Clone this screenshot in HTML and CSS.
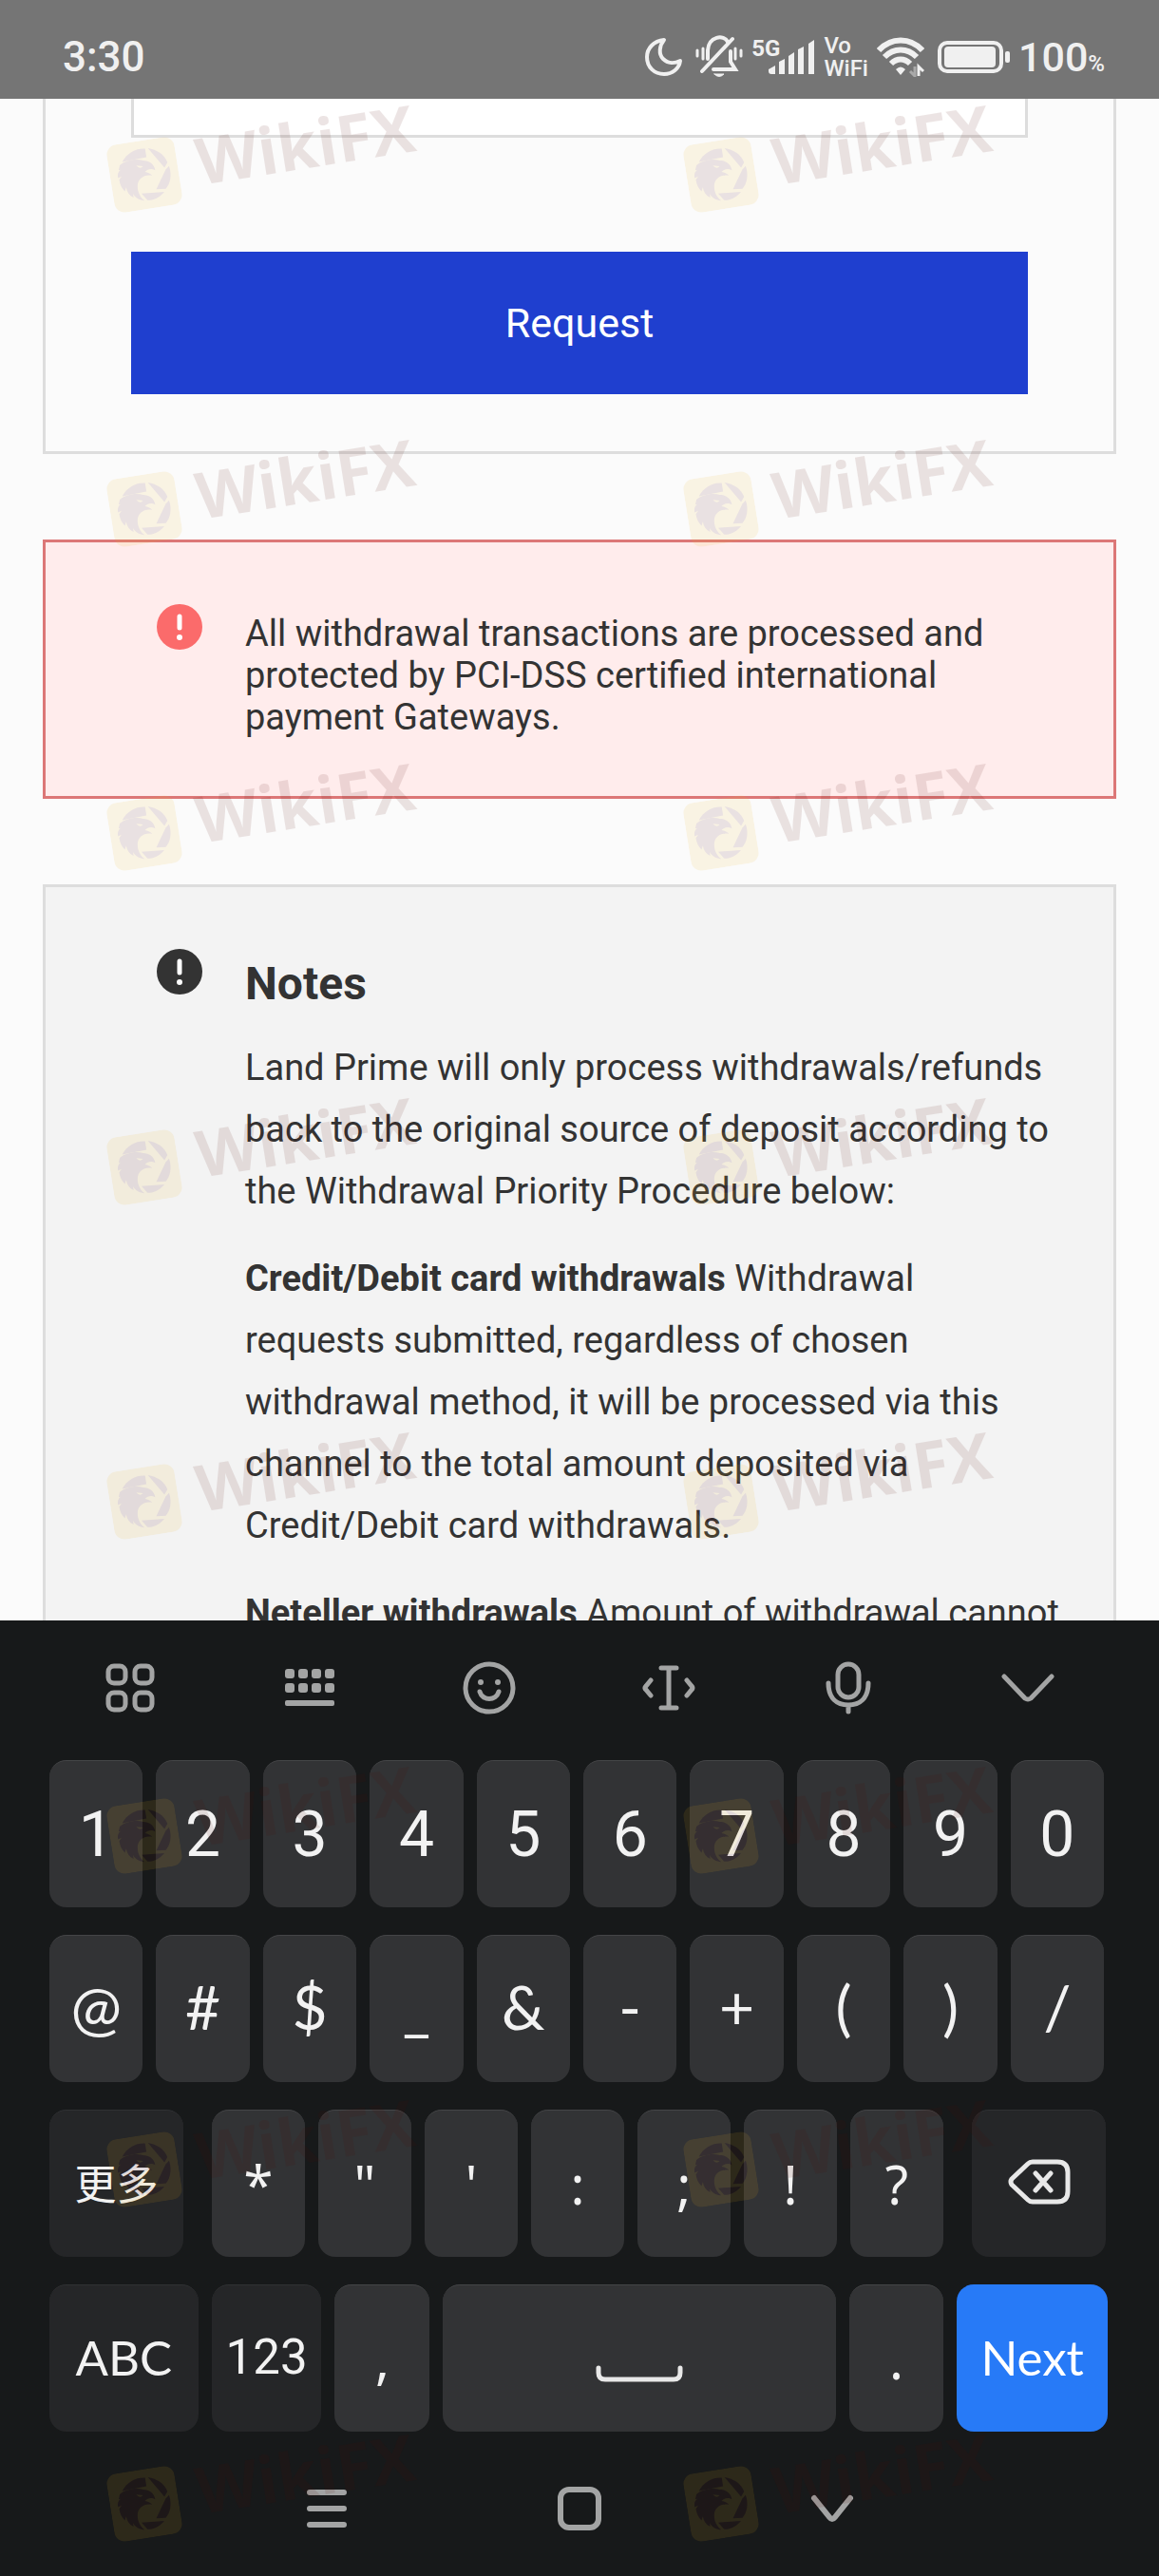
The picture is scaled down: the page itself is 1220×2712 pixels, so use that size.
FILE: index.html
```html
<!DOCTYPE html>
<html lang="en">
<head>
    <meta charset="UTF-8">
    <meta name="viewport" content="width=device-width, initial-scale=1.0">
    <title>Withdrawal request</title>
    <link rel="stylesheet" href="styles.css">
</head>
<body>
    <svg class="defs" aria-hidden="true">
        <symbol id="badge" viewBox="0 0 72 72">
            <rect width="72" height="72" rx="11" fill="#f1b41a"/>
            <g fill="#540810">
                <path d="M15 19 C22 10 32 7 41 9 L41 18 Z"/>
                <path d="M44 9 C53 12 60 18 62 27 L58 32 Z"/>
                <path d="M63 31 C65 41 61 50 56 54 L46 53 L59 34 Z"/>
                <path d="M54 57 C47 63 40 64 35 63 L30 55 Z"/>
                <path d="M12 22 C18 18 30 17 37 21 C43 22 48 26 48 33 C44 30 40 31 37 33 C40 34 43 36 44 38 C36 35 28 39 27 47 C26 53 28 59 32 63 C27 62 23 59 21 54 L21 58 C17 55 15 51 15 46 L13 50 C10 46 9 42 9 37 L12 34 L8 35 C8 31 9 29 12 27 L10 27 Z"/>
            </g>
            <path d="M29 25 L36 27 Q32 30 29 25 Z" fill="#f1b41a"/>
        </symbol>
        <symbol id="alert" viewBox="0 0 48 48">
            <circle cx="24" cy="24" r="24"/>
            <path d="M24 13 V25" stroke="#fff" stroke-width="5" stroke-linecap="round"/>
            <circle cx="24" cy="35" r="3" fill="#fff"/>
        </symbol>
    </svg>

    <div class="screen">
        <header class="status">
            <time class="clock">3:30</time>
            <div class="status-icons">
                <svg class="moon" width="40" height="42" viewBox="0 0 40 42" fill="none" stroke="#f0f0f0" stroke-width="4" stroke-linejoin="round"><path d="M20 3 C9 4 2 12 2 21 C2 32 10 39 20 39 C29 39 36 33 37 25 C31 28 24 28 19 23 C14 18 15 9 20 3 Z"/></svg>
                <svg width="50" height="46" viewBox="0 0 50 46" fill="none" stroke="#f0f0f0" stroke-width="4" stroke-linecap="round"><path d="M7 38 L39 4"/><path d="M13 25 V16 C14 1 30 -1 34 7"/><path d="M37 17 V28 L42 36 H19"/><path d="M20 41 H30 Q25 46 20 41 Z" fill="#f0f0f0" stroke-width="1"/><path d="M2 16 V22 M8 14 V25 M42 14 V25 M48 16 V22" stroke-width="3"/></svg>
                <div class="network">
                    <span class="network-type">5G</span>
                    <svg width="49" height="36" viewBox="0 0 49 36" fill="#f0f0f0"><path d="M0 33 V31 L7 27 V36 H3 Q0 36 0 33 Z"/><path d="M11 23 L17 20 V36 H11 Z"/><path d="M21 17 L27 13 V36 H21 Z"/><path d="M31 10 L37 7 V36 H31 Z"/><path d="M42 4 L48 0 V36 H42 Z"/></svg>
                </div>
                <div class="vowifi"><span>Vo</span><span>WiFi</span></div>
                <svg width="50" height="42" viewBox="0 0 50 42" fill="none" stroke="#f0f0f0" stroke-width="6"><path d="M2 14 C15 0 35 0 48 14"/><path d="M8 21 C18 11 32 11 42 21"/><path d="M15 28 C21 22 29 22 35 28"/><path d="M20 34 Q25 29 30 34 L25 40 Z" fill="#f0f0f0" stroke="none"/><path d="M44 41 V31 L49 36" stroke-width="3"/><path d="M40 31 V41 L35 36" stroke="#aaa" stroke-width="3"/></svg>
                <svg class="battery" width="76" height="34" viewBox="0 0 76 34" fill="none"><rect x="2" y="2" width="65" height="30" rx="8" stroke="#f0f0f0" stroke-width="4"/><rect x="7" y="6" width="54" height="22" rx="4" fill="#f0f0f0"/><rect x="71" y="11" width="5" height="12" rx="2" fill="#f0f0f0"/></svg>
                <span class="percent">100<small>%</small></span>
            </div>
        </header>

        <main class="content">
            <form class="card form-card">
                <input class="field" type="text" aria-label="Amount">
                <button class="request" type="button">Request</button>
            </form>

            <section class="card notice">
                <svg class="notice-icon red"><use href="#alert"/></svg>
                <p>All withdrawal transactions are processed and protected by PCI-DSS certified international payment Gateways.</p>
            </section>

            <section class="card notes">
                <svg class="notice-icon"><use href="#alert"/></svg>
                <div class="notes-text">
                    <h2>Notes</h2>
                    <p>Land Prime will only process withdrawals/refunds back to the original source of deposit according to the Withdrawal Priority Procedure below:</p>
                    <p><b>Credit/Debit card withdrawals</b> Withdrawal requests submitted, regardless of chosen withdrawal method, it will be processed via this channel to the total amount deposited via Credit/Debit card withdrawals.</p>
                    <p><b>Neteller withdrawals</b> Amount of withdrawal cannot</p>
                </div>
            </section>
        </main>

        <section class="keyboard">
            <div class="tools">
                <button aria-label="Menu"><svg width="52" height="52" viewBox="0 0 52 52"><rect x="3" y="3" width="18" height="18" rx="6"/><rect x="31" y="3" width="18" height="18" rx="6"/><rect x="3" y="31" width="18" height="18" rx="6"/><rect x="31" y="31" width="18" height="18" rx="6"/></svg></button>
                <button aria-label="Layout"><svg class="solid" width="52" height="40" viewBox="0 0 52 40"><rect width="10" height="10" rx="3"/><rect x="14" width="10" height="10" rx="3"/><rect x="28" width="10" height="10" rx="3"/><rect x="42" width="10" height="10" rx="3"/><rect y="15" width="10" height="10" rx="3"/><rect x="14" y="15" width="10" height="10" rx="3"/><rect x="28" y="15" width="10" height="10" rx="3"/><rect x="42" y="15" width="10" height="10" rx="3"/><rect y="33" width="52" height="6" rx="2"/></svg></button>
                <button aria-label="Emoji"><svg width="56" height="56" viewBox="0 0 56 56"><circle cx="28" cy="28" r="25"/><path d="M18 32 C21 42 35 42 38 32"/><circle class="dot" cx="19" cy="22" r="3"/><circle class="dot" cx="37" cy="22" r="3"/></svg></button>
                <button aria-label="Move cursor"><svg width="56" height="50" viewBox="0 0 56 50"><path d="M20 4 H36 M28 4 V46 M20 46 H36 M9 17 L4 23 Q2 25 4 27 L9 33 M47 17 L52 23 Q54 25 52 27 L47 33"/></svg></button>
                <button aria-label="Voice"><svg width="48" height="56" viewBox="0 0 48 56"><rect x="13" y="3" width="22" height="35" rx="11"/><path d="M3 23 C3 39 12 46 24 46 C36 46 45 39 45 23 M24 46 V53"/></svg></button>
                <button aria-label="Hide keyboard"><svg width="56" height="30" viewBox="0 0 56 30"><path d="M3 3 L25 26 Q28 28 31 26 L53 3"/></svg></button>
            </div>

            <div class="keys">
                <div class="row digits">
                    <button class="key">1</button><button class="key">2</button><button class="key">3</button><button class="key">4</button><button class="key">5</button><button class="key">6</button><button class="key">7</button><button class="key">8</button><button class="key">9</button><button class="key">0</button>
                </div>
                <div class="row signs">
                    <button class="key">@</button><button class="key">#</button><button class="key">$</button><button class="key">_</button><button class="key">&amp;</button><button class="key">-</button><button class="key">+</button><button class="key">(</button><button class="key">)</button><button class="key">/</button>
                </div>
                <div class="row wide-gap">
                    <button class="key dark more" lang="zh">更多</button>
                    <div class="row middle">
                        <button class="key">*</button><button class="key">"</button><button class="key">'</button><button class="key">:</button><button class="key">;</button><button class="key">!</button><button class="key">?</button>
                    </div>
                    <button class="key dark more" aria-label="Backspace"><svg width="66" height="48" viewBox="0 0 66 48" fill="none" stroke="#e8e8e8" stroke-width="5" stroke-linecap="round" stroke-linejoin="round"><path d="M26 3 H52 Q63 3 63 14 V34 Q63 45 52 45 H26 Q23 45 21 43 L4 27 Q2 24 4 21 L21 5 Q23 3 26 3 Z"/><path d="M29 15 L45 33 M45 15 L29 33"/></svg></button>
                </div>
                <div class="row">
                    <button class="key dark abc">ABC</button>
                    <button class="key dark num">123</button>
                    <button class="key">,</button>
                    <button class="key space" aria-label="Space"><svg width="92" height="18" viewBox="0 0 92 18" fill="none" stroke="#e8e8e8" stroke-width="5" stroke-linecap="round"><path d="M3 3 V8 Q3 15 10 15 H82 Q89 15 89 8 V3"/></svg></button>
                    <button class="key">.</button>
                    <button class="key next">Next</button>
                </div>
            </div>

            <nav class="navbar">
                <button aria-label="Recent"><svg width="44" height="44" viewBox="0 0 44 44"><path d="M4 5 H40 M4 22 H40 M4 39 H40"/></svg></button>
                <button aria-label="Home"><svg width="46" height="46" viewBox="0 0 46 46"><rect x="3" y="3" width="40" height="40" rx="9"/></svg></button>
                <button aria-label="Back"><svg width="46" height="30" viewBox="0 0 46 30"><path d="M4 4 L20 24 Q23 28 26 24 L42 4"/></svg></button>
            </nav>
        </section>

        <div class="watermarks" aria-hidden="true">
            <div class="mark"><svg><use href="#badge"/></svg><span>WikiFX</span></div>
            <div class="mark"><svg><use href="#badge"/></svg><span>WikiFX</span></div>
            <div class="mark"><svg><use href="#badge"/></svg><span>WikiFX</span></div>
            <div class="mark"><svg><use href="#badge"/></svg><span>WikiFX</span></div>
            <div class="mark"><svg><use href="#badge"/></svg><span>WikiFX</span></div>
            <div class="mark"><svg><use href="#badge"/></svg><span>WikiFX</span></div>
            <div class="mark"><svg><use href="#badge"/></svg><span>WikiFX</span></div>
            <div class="mark"><svg><use href="#badge"/></svg><span>WikiFX</span></div>
            <div class="mark"><svg><use href="#badge"/></svg><span>WikiFX</span></div>
            <div class="mark"><svg><use href="#badge"/></svg><span>WikiFX</span></div>
            <div class="mark"><svg><use href="#badge"/></svg><span>WikiFX</span></div>
            <div class="mark"><svg><use href="#badge"/></svg><span>WikiFX</span></div>
            <div class="mark"><svg><use href="#badge"/></svg><span>WikiFX</span></div>
            <div class="mark"><svg><use href="#badge"/></svg><span>WikiFX</span></div>
            <div class="mark"><svg><use href="#badge"/></svg><span>WikiFX</span></div>
            <div class="mark"><svg><use href="#badge"/></svg><span>WikiFX</span></div>
        </div>
    </div>
</body>
</html>
```
FILE: styles.css
```css
* {
    box-sizing: border-box;
}
body {
    margin: 0;
    font-family: Roboto, "Noto Sans CJK SC", sans-serif;
    color: #333;
    background-color: #fbfbfb;
}
button {
    font-family: inherit;
    border: none;
    padding: 0;
    cursor: pointer;
}
.defs {
    display: none;
}
.screen {
    position: relative;
    display: flex;
    flex-direction: column;
    height: 100vh;
    overflow: hidden;
}

/* status bar */
.status {
    display: flex;
    flex: none;
    justify-content: space-between;
    align-items: center;
    height: 104px;
    padding: 16px 57px 0 66px;
    background-color: #757575;
    color: #f0f0f0;
}
.clock {
    font-size: 44px;
    font-weight: 500;
}
.status-icons {
    display: flex;
    align-items: center;
    gap: 9px;
}
.moon {
    margin-right: 4px;
}
.network {
    display: flex;
    align-items: flex-end;
}
.network-type {
    align-self: flex-start;
    margin-right: -12px;
    font-size: 24px;
    line-height: 18px;
    font-weight: 700;
}
.vowifi {
    display: flex;
    flex-direction: column;
    font-size: 24px;
    line-height: 24px;
    font-weight: 500;
}
.battery {
    margin-left: 5px;
}
.percent {
    font-size: 43px;
    font-weight: 500;
}
.percent small {
    font-size: 24px;
}

/* page */
.content {
    flex: 1;
    min-height: 0;
    overflow: hidden;
    padding: 0 45px;
}
.card {
    border: 3px solid #ddd;
    margin-bottom: 90px;
}
.form-card {
    border-top: none;
    padding: 0 90px 60px;
}
.field {
    display: block;
    width: 100%;
    height: 41px;
    border: 3px solid #ddd;
    border-top: none;
    background-color: #fff;
    font-size: 38px;
}
.request {
    width: 100%;
    height: 150px;
    margin-top: 120px;
    background-color: #1f3fcf;
    color: #fff;
    font-size: 43px;
}
.notice, .notes {
    display: flex;
    align-items: flex-start;
    gap: 45px;
    padding: 65px 54px 0 117px;
    font-size: 38px;
}
.notice {
    height: 273px;
    border-color: #dc7777;
    background-color: #ffecec;
}
.notice p {
    margin: 9px 0 0;
    line-height: 44px;
}
.notes {
    background-color: #f3f3f3;
}
.notice-icon {
    flex: none;
    width: 48px;
    height: 48px;
    fill: #333;
}
.red {
    fill: #fb6b6b;
}
.notes-text h2 {
    margin: 9px 0 28px;
    font-size: 48px;
    line-height: 56px;
}
.notes-text p {
    margin: 0 0 27px;
    line-height: 65px;
}

/* keyboard */
.keyboard {
    flex: none;
    background-color: #17191a;
}
.tools {
    display: flex;
    height: 147px;
    padding: 0 44px 6px 42px;
}
.tools button, .navbar button {
    display: flex;
    flex: 1;
    align-items: center;
    justify-content: center;
    background: none;
}
.tools svg, .navbar svg {
    fill: none;
    stroke: #a3a4a4;
    stroke-width: 5;
    stroke-linecap: round;
}
.navbar svg {
    stroke-width: 6;
}
.tools .solid, .tools .dot {
    fill: #a3a4a4;
    stroke: none;
}
.keys {
    display: flex;
    flex-direction: column;
    gap: 29px;
    padding: 0 54px 0 52px;
}
.row {
    display: flex;
    gap: 14px;
}
.digits, .signs {
    padding-right: 4px;
}
.wide-gap {
    gap: 30px;
    padding-right: 2px;
}
.middle {
    flex: 770;
}
.key {
    flex: 100 1 0;
    height: 155px;
    border-radius: 18px;
    border-top: 1px solid #444547;
    background-color: #323335;
    color: #f2f2f2;
    font-family: "Noto Sans", "Noto Sans CJK SC", sans-serif;
    font-size: 56px;
    font-weight: 400;
}
.digits .key {
    font-family: Roboto, sans-serif;
    font-size: 66px;
}
.signs .key {
    padding-bottom: 6px;
    font-family: Lato, sans-serif;
    font-size: 64px;
}
.key.dark {
    border-top-color: #303133;
    background-color: #252628;
}
.key.more {
    flex-grow: 141;
    padding-bottom: 4px;
    font-family: "Noto Sans CJK SC", sans-serif;
    font-size: 44px;
}
.more svg {
    display: block;
    margin: 0 auto;
}
.key.abc, .key.num, .key.next {
    padding-bottom: 3px;
    font-family: Lato, sans-serif;
    font-size: 51px;
}
.key.abc {
    flex-grow: 157;
}
.key.num {
    flex-grow: 116;
    font-family: Roboto, sans-serif;
}
.key.space {
    flex-grow: 414;
}
.space svg {
    display: block;
    margin: 32px auto 0;
}
.key.next {
    flex-grow: 159;
    border: none;
    background-color: #277af7;
    color: #fff;
}
.navbar {
    display: flex;
    height: 152px;
    padding: 9px 211px 0;
}

/* watermark layer over the whole screen */
.watermarks {
    position: absolute;
    top: 138px;
    left: 116px;
    display: grid;
    grid-template-columns: 607px 607px;
    grid-template-rows: 352px 341px 352px 352px 352px 351px 352px 352px;
    pointer-events: none;
}
.mark {
    display: flex;
    align-items: center;
    gap: 20px;
    height: 72px;
    margin-top: 10px;
    opacity: 0.1;
    transform: rotate(-9deg);
    transform-origin: 36px 36px;
}
.mark svg {
    flex: none;
    width: 72px;
    height: 72px;
}
.mark span {
    color: #540800;
    font-family: "Open Sans", sans-serif;
    font-size: 68px;
    font-weight: 700;
    line-height: 60px;
    padding-bottom: 12px;
}
```
